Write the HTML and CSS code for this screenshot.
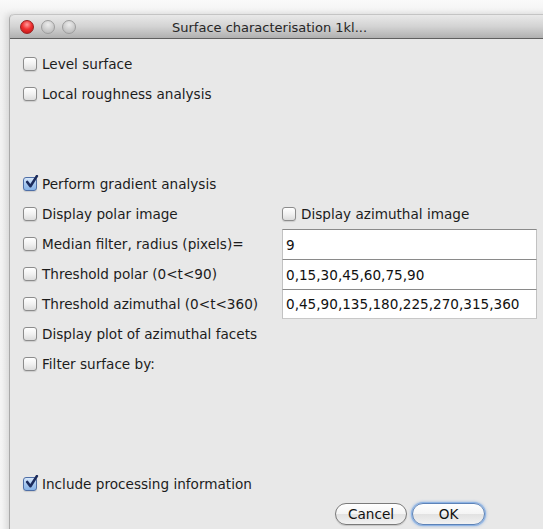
FILE: index.html
```html
<!DOCTYPE html>
<html>
<head>
<meta charset="utf-8">
<title>Surface characterisation</title>
<link rel="stylesheet" href="styles.css">
</head>
<body>
<div class="window">
  <div class="titlebar">
    <div class="lights">
      <span class="light red"></span>
      <span class="light gray"></span>
      <span class="light gray"></span>
    </div>
    <div class="title">Surface characterisation 1kl...</div>
  </div>
  <div class="content">
    <div class="grid">
      <label class="check"><span class="box"></span>Level surface</label>
      <span></span>
      <label class="check"><span class="box"></span>Local roughness analysis</label>
      <span></span>
      <span class="spacer"></span><span></span>
      <span class="spacer"></span><span></span>
      <label class="check"><span class="box on"><svg viewBox="0 0 14 14"><path d="M3 6.5 L6 10.5 L12 1" fill="none" stroke="#1b2b5c" stroke-width="2.4" stroke-linecap="round" stroke-linejoin="round"/></svg></span>Perform gradient analysis</label>
      <span></span>
      <label class="check"><span class="box"></span>Display polar image</label>
      <label class="check"><span class="box"></span>Display azimuthal image</label>
      <label class="check"><span class="box"></span>Median filter, radius (pixels)=</label>
      <div class="field">9</div>
      <label class="check"><span class="box"></span>Threshold polar (0&lt;t&lt;90)</label>
      <div class="field">0,15,30,45,60,75,90</div>
      <label class="check"><span class="box"></span>Threshold azimuthal (0&lt;t&lt;360)</label>
      <div class="field last">0,45,90,135,180,225,270,315,360</div>
      <label class="check"><span class="box"></span>Display plot of azimuthal facets</label>
      <span></span>
      <label class="check"><span class="box"></span>Filter surface by:</label>
      <span></span>
      <span class="spacer"></span><span></span>
      <span class="spacer"></span><span></span>
      <span class="spacer"></span><span></span>
      <label class="check"><span class="box on"><svg viewBox="0 0 14 14"><path d="M3 6.5 L6 10.5 L12 1" fill="none" stroke="#1b2b5c" stroke-width="2.4" stroke-linecap="round" stroke-linejoin="round"/></svg></span>Include processing information</label>
      <span></span>
    </div>
    <div class="buttons">
      <button class="btn">Cancel</button>
      <button class="btn default">OK</button>
    </div>
  </div>
</div>
</body>
</html>
```

FILE: styles.css
```css
html, body {
  margin: 0;
  padding: 0;
  width: 543px;
  height: 529px;
  overflow: hidden;
  background: linear-gradient(#fafafa, #f2f2f2 14px, #f6f6f6);
  font-family: "DejaVu Sans", "Liberation Sans", sans-serif;
  font-size: 13.6px;
  color: #1c1c1c;
}

.window {
  margin: 14px 0 0 9px;
  width: 560px;
  height: 540px;
  background: #e8e8e8;
  border-left: 1px solid #a9a9a9;
  border-top-left-radius: 5px;
  box-shadow: -3px 0 6px rgba(0, 0, 0, 0.12);
  overflow: hidden;
}

.titlebar {
  height: 23px;
  display: flex;
  align-items: center;
  background: linear-gradient(#e9e9e9, #d3d3d3 50%, #b0b0b0);
  border-top: 1px solid #c4c4c4;
  border-bottom: 1px solid #5f5f5f;
  border-top-left-radius: 5px;
}

.lights {
  display: flex;
  gap: 7px;
  margin-left: 10px;
}

.light {
  width: 14px;
  height: 14px;
  border-radius: 50%;
  box-sizing: border-box;
}

.light.red {
  background: radial-gradient(circle at 50% 30%, #ff9c9c 0, #f03030 45%, #b50f0f 100%);
  border: 1px solid #9a2020;
}

.light.gray {
  background: radial-gradient(circle at 50% 30%, #ececec 0, #cfcfcf 50%, #b2b2b2 100%);
  border: 1px solid #9d9d9d;
}

.title {
  margin-left: 96px;
  font-size: 13px;
  color: #262626;
  padding-top: 1px;
}

.content {
  padding: 10px 0 0 13px;
}

.grid {
  display: grid;
  grid-template-columns: 259px 255px;
  grid-auto-rows: 30px;
}

.check {
  display: flex;
  align-items: center;
  gap: 5px;
  white-space: nowrap;
}

.box {
  width: 14px;
  height: 14px;
  box-sizing: border-box;
  border: 1px solid #8c8c8c;
  border-radius: 3px;
  background: linear-gradient(#ffffff, #f1f1f1 50%, #dcdcdc);
  box-shadow: 0 1px 1px rgba(0, 0, 0, 0.12);
  position: relative;
  flex: none;
}

.box.on {
  border-color: #4f6fa6;
  background: linear-gradient(#d8e8fb, #a9c9ef 50%, #86b2e6);
}

.box svg {
  position: absolute;
  left: 0;
  top: -3px;
  width: 15px;
  height: 15px;
}

.field {
  background: #ffffff;
  border-top: 1px solid #8a8a8a;
  border-left: 1px solid #c2c2c2;
  border-right: 1px solid #c2c2c2;
  display: flex;
  align-items: center;
  padding-left: 3px;
  color: #111;
}

.field.last {
  border-bottom: 1px solid #c8c8c8;
  height: 28px;
}

.buttons {
  display: flex;
  gap: 5px;
  padding-left: 312px;
  margin-top: 4px;
}

.btn {
  font-family: inherit;
  font-size: 13.6px;
  color: #111;
  height: 22px;
  border-radius: 11px;
  border: 1px solid #7a7a7a;
  background: linear-gradient(#ffffff, #f4f4f4 50%, #e2e2e2 52%, #f2f2f2);
  padding: 0;
  width: 72px;
  box-shadow: 0 1px 1px rgba(0, 0, 0, 0.15);
}

.btn.default {
  width: 73px;
  border-color: #5d83b8;
  box-shadow: 0 0 0 1px #8fb4e4, 0 0 3px 1px rgba(80, 140, 220, 0.6);
}
```
